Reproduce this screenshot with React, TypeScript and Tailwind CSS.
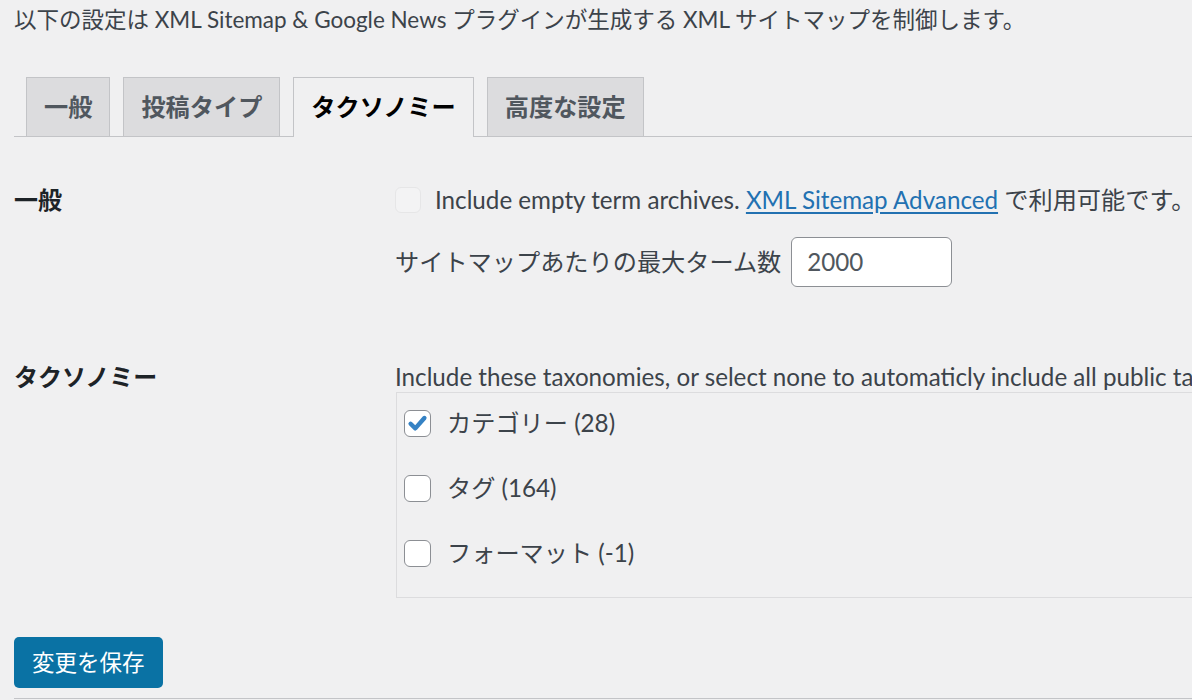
import React from "react";

const tabs = [
  { label: "一般", active: false },
  { label: "投稿タイプ", active: false },
  { label: "タクソノミー", active: true },
  { label: "高度な設定", active: false },
];

const taxonomies = [
  { label: "カテゴリー (28)", checked: true },
  { label: "タグ (164)", checked: false },
  { label: "フォーマット (-1)", checked: false },
];

function Checkbox({ checked, disabled }: { checked?: boolean; disabled?: boolean }) {
  if (disabled) {
    return (
      <span className="h-[26px] w-[26px] shrink-0 rounded-[6px] border border-[#e6e6e7] bg-[#f3f3f4]" />
    );
  }
  return (
    <span className="flex h-[27px] w-[27px] shrink-0 items-center justify-center rounded-[6px] border border-[#8c8f94] bg-white">
      {checked && (
        <svg viewBox="0 0 20 20" className="h-[23px] w-[23px]">
          <path
            d="M4 10.2 L8.1 14.2 L16 5.2"
            fill="none"
            stroke="#3582c4"
            strokeWidth="3.8"
            strokeLinecap="round"
            strokeLinejoin="round"
          />
        </svg>
      )}
    </span>
  );
}

export default function App() {
  return (
    <div className="h-[700px] w-[1192px] overflow-hidden bg-[#f0f0f1] pl-[14px] pt-[2px] font-['Lato','Noto_Sans_CJK_JP',sans-serif] text-[#3c434a]">
      <p className="whitespace-nowrap text-[22.5px] leading-[36px]">
        以下の設定は XML Sitemap &amp; Google News プラグインが生成する XML サイトマップを制御します。
      </p>

      <nav className="mt-[39px] flex gap-[13px] border-b border-[#c3c4c7] pl-[12px]">
        {tabs.map((t) =>
          t.active ? (
            <span
              key={t.label}
              className="-mb-px flex h-[60px] items-center border border-b-0 border-[#c3c4c7] bg-[#f0f0f1] px-[17px] text-[24.2px] font-semibold text-black"
            >
              {t.label}
            </span>
          ) : (
            <span
              key={t.label}
              className="flex h-[59px] items-center border border-b-0 border-[#c3c4c7] bg-[#dcdcde] px-[17px] text-[24.2px] font-semibold text-[#50575e]"
            >
              {t.label}
            </span>
          ),
        )}
      </nav>

      <div className="mt-[45px] flex">
        <div className="w-[381px] shrink-0 text-[24px] font-semibold leading-[36px] text-[#1d2327]">一般</div>
        <div className="flex flex-col whitespace-nowrap text-[24.2px]">
          <div className="flex h-[36px] items-center gap-[14px]">
            <Checkbox disabled />
            <span>
              Include empty term archives.{" "}
              <a href="#" className="text-[#2271b1] underline underline-offset-[3px]">
                XML Sitemap Advanced
              </a>{" "}
              で利用可能です。
            </span>
          </div>
          <div className="mt-[19px] flex items-center gap-[10px]">
            <span>サイトマップあたりの最大ターム数</span>
            <span className="flex h-[50px] w-[161px] items-center rounded-[6px] border border-[#8c8f94] bg-white px-[15px] text-[#50575e]">
              2000
            </span>
          </div>
        </div>
      </div>

      <div className="mt-[75px] flex">
        <div className="w-[381px] shrink-0 text-[24px] font-semibold leading-[30px] text-[#1d2327]">タクソノミー</div>
        <div className="flex flex-col whitespace-nowrap text-[24.2px]">
          <p className="leading-[30px]">
            Include these taxonomies, or select none to automaticly include all public taxonomies.
          </p>
          <div className="ml-px flex w-[900px] flex-col gap-[29px] border border-[#dcdcde] pb-[26px] pl-[7px] pt-[12px]">
            {taxonomies.map((t) => (
              <label key={t.label} className="flex h-[36px] items-center gap-[16px]">
                <Checkbox checked={t.checked} />
                <span>{t.label}</span>
              </label>
            ))}
          </div>
        </div>
      </div>

      <button className="mt-[39px] flex h-[51px] items-center rounded-[5px] bg-[#0a72a4] px-[18px] text-[22.5px] text-white">
        変更を保存
      </button>

      <div className="mt-[10px] border-t border-[#c3c4c7]" />
    </div>
  );
}
